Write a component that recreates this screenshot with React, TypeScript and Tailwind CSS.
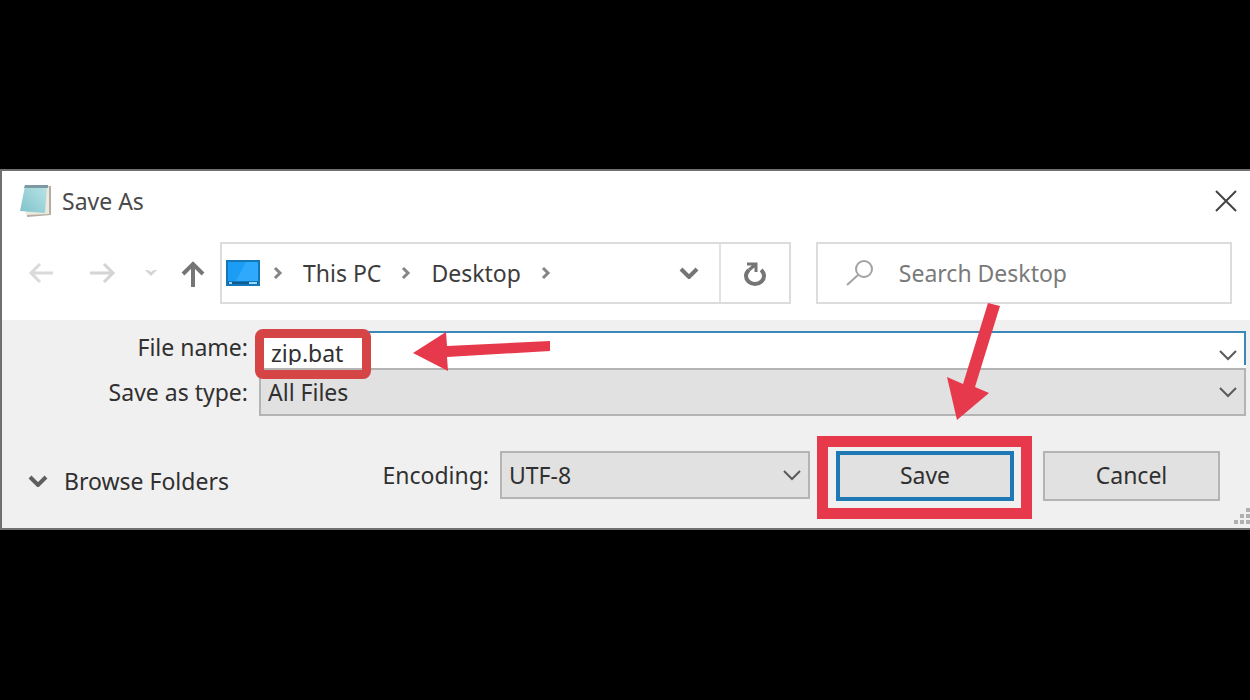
import type { ReactNode, SelectHTMLAttributes } from 'react'

function Chevron({ className }: { className?: string }) {
  return (
    <svg viewBox="0 0 20 12" fill="none" stroke="currentColor" aria-hidden="true" className={className}>
      <path d="M2 2l8 8 8-8" />
    </svg>
  )
}

function Crumb({ children }: { children: ReactNode }) {
  return (
    <button type="button" className="text-[#3c3c3c]">
      {children}
    </button>
  )
}

function CrumbArrow() {
  return (
    <svg width="10" height="14" viewBox="0 0 10 14" fill="none" stroke="#858585" strokeWidth="3" aria-hidden="true">
      <path d="M2 2l5 5-5 5" />
    </svg>
  )
}

function Dropdown({ children, ...props }: SelectHTMLAttributes<HTMLSelectElement>) {
  return (
    <div className="relative">
      <select
        {...props}
        className="block h-12 w-full appearance-none border-2 border-[#b4b4b4] bg-[#e1e1e1] pl-[7px] text-[#303030]"
      >
        {children}
      </select>
      <Chevron className="pointer-events-none absolute right-2 top-[18px] h-3 w-5 stroke-2 text-[#5a5a5a]" />
    </div>
  )
}

function NotepadIcon() {
  return (
    <svg width="32" height="34" viewBox="0 0 32 34" aria-hidden="true">
      <defs>
        <linearGradient id="notepad-cover" x1="1" y1="0" x2="0" y2="1">
          <stop offset="0" stopColor="#b9e3e6" />
          <stop offset="1" stopColor="#7fc3cb" />
        </linearGradient>
      </defs>
      <path d="M8 4l23-2v29l-24 2z" fill="#b3ada2" />
      <path d="M6 3h23v27l-23 1z" fill="#ece9e1" />
      <path d="M5 2h22l-2 27-25-2z" fill="url(#notepad-cover)" />
      <path d="M5 1h23v3H4z" fill="#7d99a1" />
    </svg>
  )
}

function DesktopIcon() {
  return (
    <svg width="34" height="26" viewBox="0 0 34 26" aria-hidden="true">
      <path d="M0 0h34v26H0z" fill="#1478b8" />
      <path d="M2 2h30v19H2z" fill="#1c9df5" />
      <path d="M20 2h12v19H10z" fill="#2fa9fb" />
      <path d="M2 22h30v2H2z" fill="#0d5c92" />
      <path d="M3 23h3m17 0h8" stroke="#9bd8f7" strokeWidth="2" />
    </svg>
  )
}

function TitleBar() {
  return (
    <header className="flex h-[61px] items-center pb-0.5 pl-[18px] pr-3">
      <NotepadIcon />
      <h1 className="ml-[10px] flex-1 text-[#4a4a4a]">Save As</h1>
      <button type="button" aria-label="Close">
        <svg width="24" height="24" viewBox="0 0 24 24" fill="none" stroke="#444" strokeWidth="2">
          <path d="M2 2l20 20M22 2L2 22" />
        </svg>
      </button>
    </header>
  )
}

function NavBar() {
  return (
    <div className="flex items-center pb-4 pl-[26px] pr-[18px] pt-[10px]">
      <button type="button" aria-label="Back">
        <svg width="26" height="24" viewBox="0 0 26 24" fill="none" stroke="#dadada" strokeWidth="3">
          <path d="M25 12H4M12 3l-9 9 9 9" />
        </svg>
      </button>
      <button type="button" aria-label="Forward" className="ml-9">
        <svg width="26" height="24" viewBox="0 0 26 24" fill="none" stroke="#d4d4d4" strokeWidth="3">
          <path d="M0 12h22M14 3l9 9-9 9" />
        </svg>
      </button>
      <button type="button" aria-label="Recent locations" className="ml-7">
        <svg width="14" height="8" viewBox="0 0 14 8" fill="#d4d4d4">
          <path d="M1 1h3l3 2 3-2h3L7 7z" />
        </svg>
      </button>
      <button type="button" aria-label="Up" className="ml-[23px]">
        <svg width="24" height="28" viewBox="0 0 24 28" fill="none" stroke="#757575" strokeWidth="4">
          <path d="M12 28V4M2 15L12 5l10 10" />
        </svg>
      </button>

      <div className="ml-[15px] flex h-[62px] flex-[11] border-2 border-[#dcdcdc]">
        <nav aria-label="Location" className="flex flex-1 items-center pl-1">
          <DesktopIcon />
          <div className="ml-[13px] flex items-center gap-5">
            <CrumbArrow />
            <Crumb>This PC</Crumb>
            <CrumbArrow />
            <Crumb>Desktop</Crumb>
            <CrumbArrow />
          </div>
        </nav>
        <button type="button" aria-label="Previous locations" className="px-5">
          <Chevron className="h-3 w-5 stroke-[4] text-[#757575]" />
        </button>
        <button type="button" aria-label="Refresh" className="border-l-2 border-[#e2e2e2] px-[22px]">
          <svg width="24" height="26" viewBox="0 0 24 26" fill="none" stroke="#757575" strokeWidth="3">
            <path d="M18 10a9 8 0 1 1-12 0" strokeWidth="4" />
            <path d="M4 4h9v8M13 4L6 10" />
          </svg>
        </button>
      </div>

      <label className="ml-[25px] flex h-[62px] flex-[8] items-center border-2 border-[#dcdcdc]">
        <svg
          width="28"
          height="28"
          viewBox="0 0 28 28"
          fill="none"
          stroke="#a3a3a3"
          strokeWidth="2"
          aria-hidden="true"
          className="ml-7"
        >
          <circle cx="18" cy="10" r="8" />
          <path d="M12 16L1 26" />
        </svg>
        <input
          type="search"
          aria-label="Search Desktop"
          placeholder="Search Desktop"
          className="ml-[25px] min-w-0 flex-1 outline-none placeholder:text-[#7a7a7a]"
        />
      </label>
    </div>
  )
}

function FileFields() {
  return (
    <div className="grid grid-cols-[246px_1fr] gap-x-[11px] pr-1 pt-[11px]">
      <label htmlFor="file-name" className="text-right leading-8">
        File name:
      </label>
      <div className="relative z-10 h-[37px] bg-white">
        <input
          id="file-name"
          defaultValue="zip.bat"
          className="block h-[34px] w-full border-r-2 border-t-2 border-[#3a87b8] bg-white pl-3 pt-2 outline-none"
        />
        <Chevron className="pointer-events-none absolute right-2 top-[18px] h-3 w-5 stroke-2 text-[#5a5a5a]" />
        <div className="pointer-events-none absolute -left-1 -top-0.5 h-[50px] w-[116px] rounded-lg border-[9px] border-[#d64545]" />
        <svg
          width="140"
          height="42"
          viewBox="0 0 140 42"
          fill="#e6394b"
          aria-hidden="true"
          className="pointer-events-none absolute left-[153px] top-0"
        >
          <path d="M1 22L34 1l1 14 103-5v10l-103 6 1 14z" />
        </svg>
      </div>

      <label htmlFor="file-type" className="text-right leading-[48px]">
        Save as type:
      </label>
      <Dropdown id="file-type">
        <option>All Files</option>
      </Dropdown>
    </div>
  )
}

function Actions() {
  return (
    <div className="flex items-center pb-[27px] pl-[26px] pr-[30px] pt-[35px]">
      <button type="button" className="flex items-center gap-4 pt-[10px]">
        <Chevron className="h-3 w-5 stroke-[4] text-[#5f5f5f]" />
        Browse Folders
      </button>
      <div className="ml-auto flex items-center pb-0.5">
        <label htmlFor="encoding" className="mr-[11px]">
          Encoding:
        </label>
        <div className="w-[310px]">
          <Dropdown id="encoding">
            <option>UTF-8</option>
          </Dropdown>
        </div>
      </div>
      <div className="relative ml-[26px]">
        <button type="submit" className="h-[50px] w-[178px] border-4 border-[#1f79b5] bg-[#e1e1e1] pb-0.5">
          Save
        </button>
        <div className="pointer-events-none absolute -bottom-[18px] -left-[19px] -right-[18px] -top-[15px] border-[11px] border-[#e6394b]" />
        <svg
          width="56"
          height="120"
          viewBox="0 0 56 120"
          fill="#e6394b"
          aria-hidden="true"
          className="pointer-events-none absolute bottom-20 left-[109px] z-10"
        >
          <path d="M43 2l12 3-25 81 14 6-32 27L2 76l16 7z" />
        </svg>
      </div>
      <button type="button" className="ml-[29px] h-[50px] w-[177px] border-2 border-[#b4b4b4] bg-[#e1e1e1] pb-0.5">
        Cancel
      </button>
    </div>
  )
}

export default function App() {
  return (
    <main className="flex min-h-screen items-center bg-black pb-px">
      <form
        onSubmit={(e) => e.preventDefault()}
        className="relative w-full border-y-2 border-l-2 border-[#707070] bg-[#f0f0f0] font-['Noto_Sans','Open_Sans',sans-serif] text-[23px] leading-8 text-[#303030]"
      >
        <div className="bg-white">
          <TitleBar />
          <NavBar />
        </div>
        <FileFields />
        <Actions />
        <svg width="16" height="16" viewBox="0 0 16 16" fill="#b0b0b0" aria-hidden="true" className="absolute bottom-1 right-0">
          <path d="M12 0h4v4h-4zM6 6h4v4H6zM12 6h4v4h-4zM0 12h4v4H0zM6 12h4v4H6zM12 12h4v4h-4z" />
        </svg>
      </form>
    </main>
  )
}
